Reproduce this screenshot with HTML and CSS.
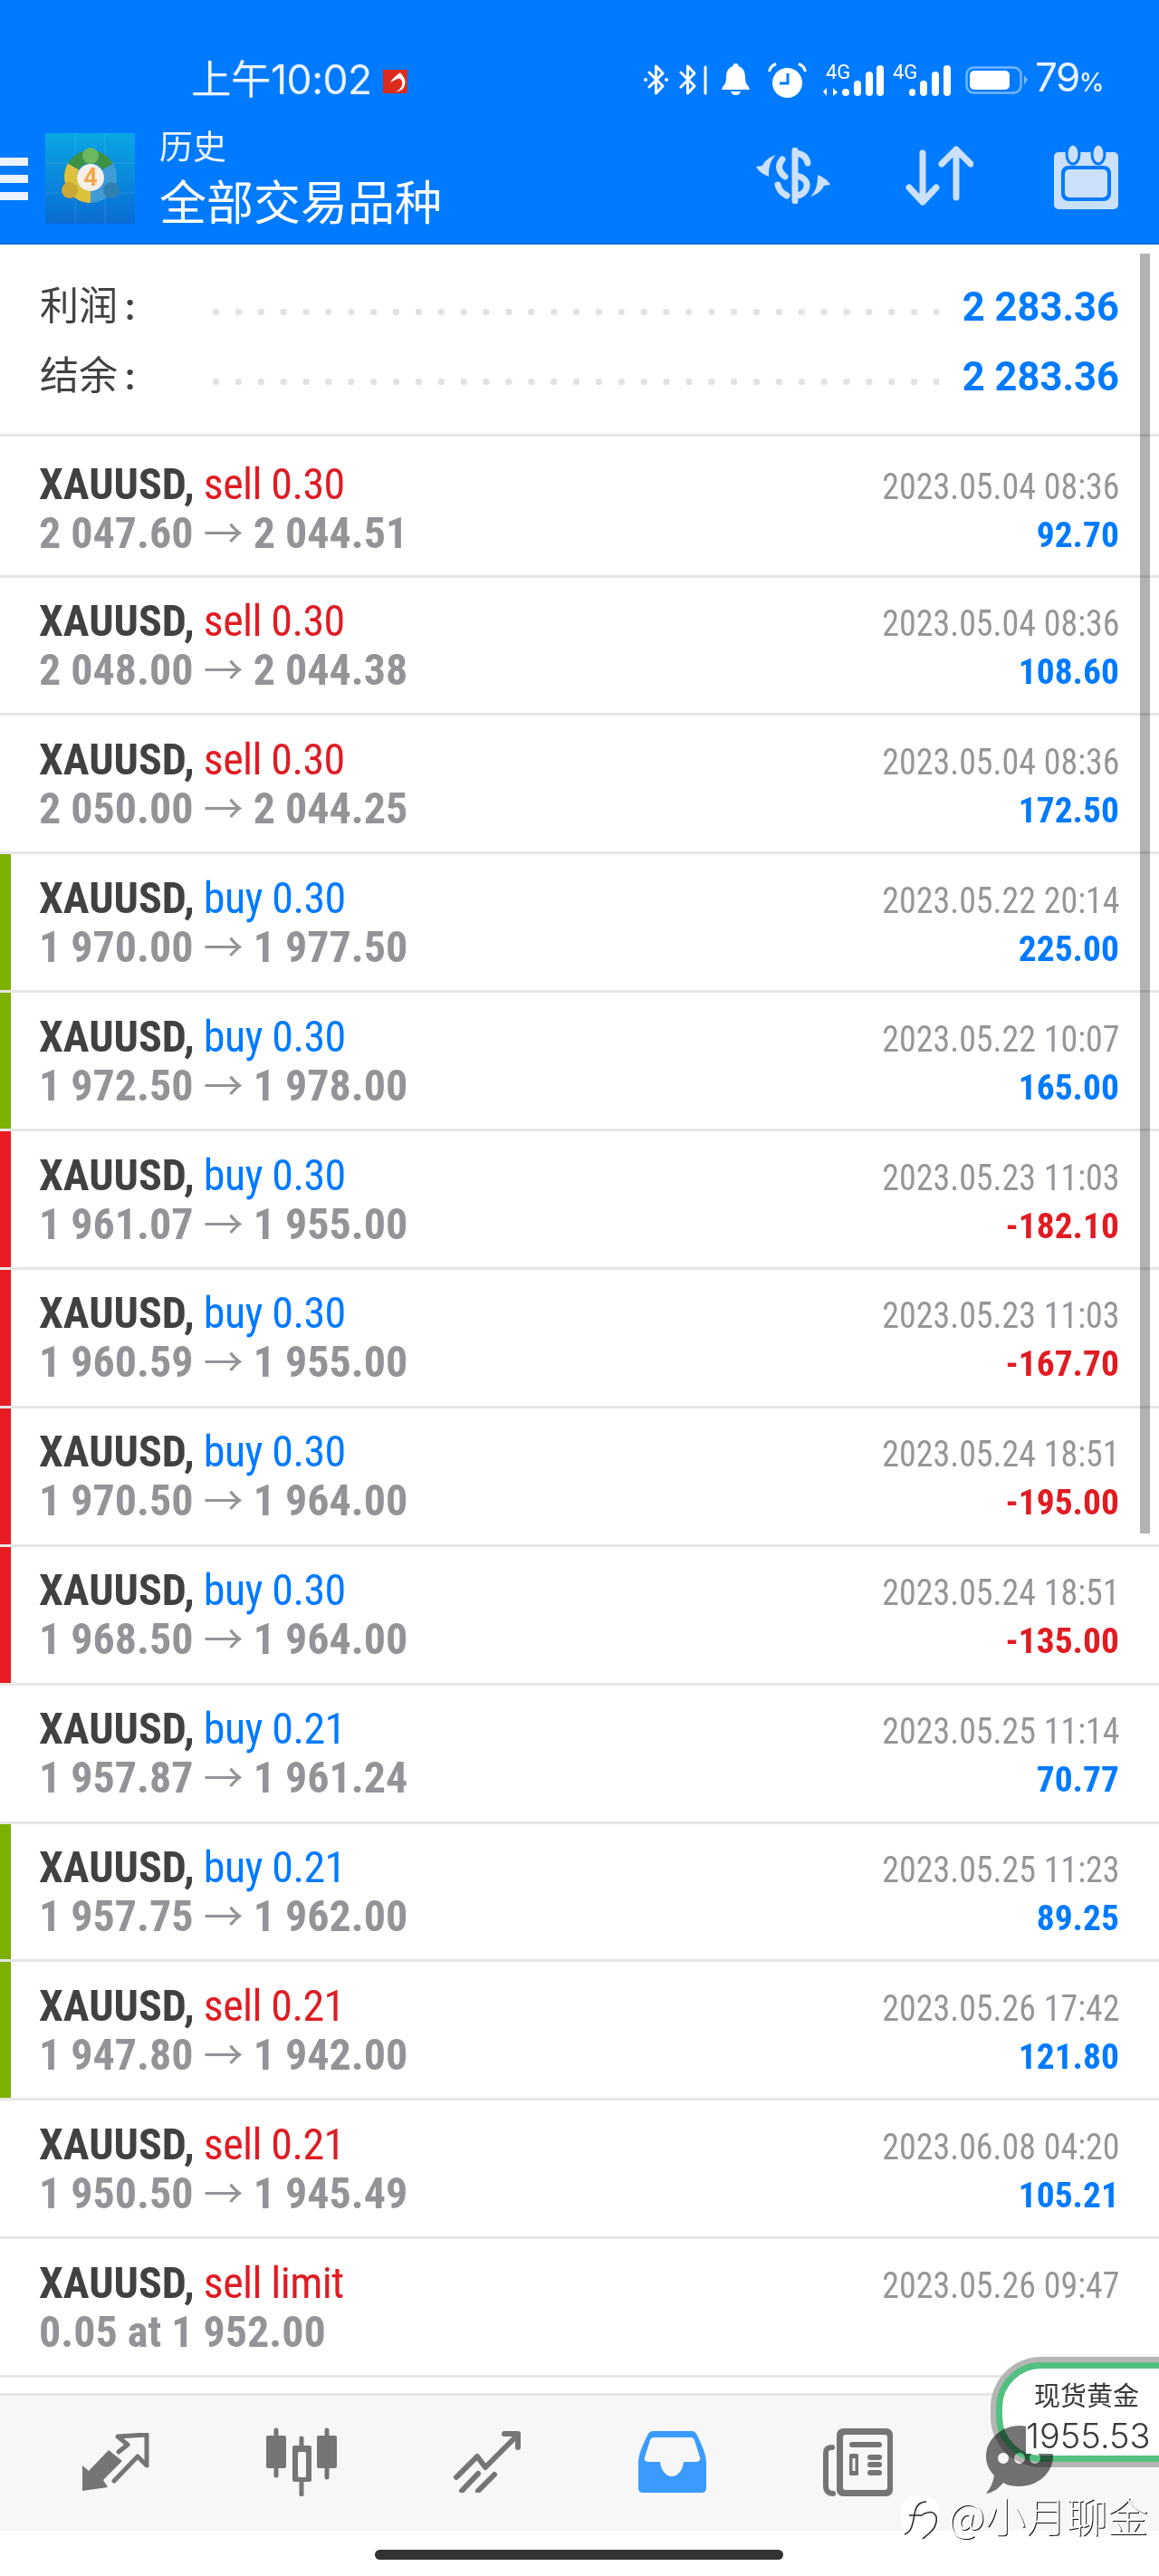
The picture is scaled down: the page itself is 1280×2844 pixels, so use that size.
FILE: index.html
```html
<!DOCTYPE html>
<html lang="zh">
<head>
  <meta charset="UTF-8">
  <meta name="viewport" content="width=device-width, initial-scale=1.0">
  <title>历史 - 全部交易品种</title>
  <link rel="stylesheet" href="styles.css">
</head>
<body>
  <div class="header">
    <!-- status bar -->
    <div class="status">
      <span class="time">上午10:02</span>
      <svg class="notif" viewBox="0 0 27 26">
        <rect width="27" height="26" fill="#dc2a1c"/>
        <path d="M8 14 C11 9 15 6 19 3 L21 6 C25 10 26 16 22 21 C20 23 17 24 14 24 C19 22 22 18 21 13 C20 10 18 9 16 10 Z" fill="#fff"/>
      </svg>
      <div class="status-icons">
        <svg width="27" height="34" viewBox="0 0 27 34"><path class="bt" d="M6 9 L21 24 L13.5 32 V2 L21 10 L6 25"/><circle cx="2" cy="17" r="2" fill="#fff"/><circle cx="25" cy="17" r="2" fill="#fff"/></svg>
        <svg class="gap-12" width="31" height="34" viewBox="0 0 31 34"><path class="bt" d="M2 9 L17 24 L9.5 32 V2 L17 10 L2 25"/><path class="bt" d="M29 3 V32"/></svg>
        <svg class="gap-16" width="31" height="36" viewBox="0 0 31 36"><path fill="#fff" d="M15.5 0a3 3 0 0 1 3 3C25 5 26 11 26 16c0 4 1 7 4 10l1 3H0l1-3c3-3 4-6 4-10 0-5 1-11 7.500-13a3 3 0 0 1 3-3z"/><path fill="#fff" d="M10 31h11c-1 3-3 4-5.500 4s-4.500-1-5.500-4z"/></svg>
        <svg class="gap-20" width="43" height="39" viewBox="0 0 43 39"><circle cx="21.500" cy="22.500" r="16.500" fill="#fff"/><path d="M22 12V23H13" fill="none" stroke="#007aff" stroke-width="3"/><path d="M1.500 10C2.500 6 5 3 9 1.500M41.500 10C40.500 6 38 3 34 1.500" fill="none" stroke="#fff" stroke-width="3"/></svg>
        <svg class="gap-18" width="67" height="40" viewBox="0 -3 67 40">
          <text class="sig-text" x="3" y="16">4G</text>
          <path d="M4 26V35L0 30ZM11 35V26L16 31" fill="#fff"/>
          <rect x="21" y="27" width="8" height="8" rx="4" fill="#fff"/>
          <rect x="34" y="18" width="8" height="17" rx="4" fill="#fff"/>
          <rect x="47" y="8" width="8" height="27" rx="4" fill="#fff"/>
          <rect x="59" y="1" width="8" height="34" rx="4" fill="#fff"/>
        </svg>
        <svg class="gap-10" width="64" height="40" viewBox="0 -3 64 40">
          <text class="sig-text" x="0" y="16">4G</text>
          <rect x="18" y="27" width="7" height="8" rx="3.500" fill="#fff"/>
          <rect x="30" y="18" width="8" height="17" rx="4" fill="#fff"/>
          <rect x="43" y="8" width="8" height="27" rx="4" fill="#fff"/>
          <rect x="56" y="1" width="8" height="34" rx="4" fill="#fff"/>
        </svg>
        <svg class="gap-16" width="69" height="31" viewBox="0 0 69 31">
          <rect x="1.500" y="1.500" width="60" height="28" rx="8" fill="none" stroke="#fff" stroke-opacity=".45" stroke-width="2.500"/>
          <rect x="5" y="5" width="44" height="21" rx="5" fill="#fff"/>
          <path d="M65 10 L69 15 L65 21Z" fill="#fff" fill-opacity=".45"/>
        </svg>
        <span class="battery-pct">79<small>%</small></span>
      </div>
    </div>

    <!-- toolbar -->
    <div class="toolbar">
      <div class="menu"><i></i><i></i><i></i></div>
      <svg class="app-icon" width="99" height="100" viewBox="0 0 99 100">
        <defs>
          <linearGradient id="appBg" x1="0" y1="0" x2="0" y2="1"><stop offset="0" stop-color="#0aa6e4"/><stop offset="1" stop-color="#0a6cd2"/></linearGradient>
        </defs>
        <rect width="99" height="100" fill="url(#appBg)"/>
        <path d="M33 0V100M66 0V100M0 33H99M0 66H99" stroke="#fff" stroke-opacity=".12"/>
        <path d="M31 37A22 22 0 0 1 69 37" fill="none" stroke="#3f9146" stroke-width="14"/>
        <path d="M31 37A22 22 0 0 0 50 70" fill="none" stroke="#dcc23c" stroke-width="14"/>
        <path d="M69 37A22 22 0 0 1 50 70" fill="none" stroke="#3f9cd6" stroke-width="14"/>
        <circle cx="50" cy="25" r="9" fill="#6cb860"/>
        <circle cx="27" cy="63" r="9" fill="#c9a838"/>
        <circle cx="73" cy="63" r="9" fill="#2f7fb0"/>
        <circle cx="50" cy="49" r="15" fill="#f4efe8"/>
        <text class="app-four" x="50" y="58">4</text>
      </svg>
      <div class="title">
        <div class="title-small">历史</div>
        <div class="title-big">全部交易品种</div>
      </div>
      <div class="tools">
        <svg class="tool-exch" width="82" height="62" viewBox="0 0 82 62">
          <path class="tool-line" d="M43 3V59M44 6C52 7 56 11 57 17M29 13C24 19 24 26 32 32M24 41C25 46 28 50 34 53M44 31C52 32 57 37 56 43C55 49 50 53 44 53"/>
          <path class="tool-fill" d="M22 8C16 14 14 20 14 32C10 30 4 28 0 21L7 20C9 15 15 10 22 8Z"/>
          <path class="tool-fill" d="M60 54C66 48 68 42 68 30C72 32 78 34 82 41L75 42C73 47 67 52 60 54Z"/>
        </svg>
        <svg class="tool-sort" width="75" height="66" viewBox="0 0 75 66">
          <path class="tool-line" d="M19 8V62M4 46L19 62L34 46M56 4V57M40 20L56 4L72 20"/>
        </svg>
        <svg width="71" height="73" viewBox="0 0 71 73">
          <rect y="10" width="71" height="63" rx="5" class="tool-fill"/>
          <ellipse cx="21" cy="12" rx="7" ry="11" class="tool-fill ear"/>
          <ellipse cx="49" cy="12" rx="7" ry="11" class="tool-fill ear"/>
          <rect x="8" y="25" width="55" height="39" rx="8" fill="#007aff"/>
          <rect x="12" y="29" width="47" height="31" rx="5" class="tool-fill"/>
        </svg>
      </div>
    </div>
  </div>

  <div class="list">
    <div class="summary">
      <div class="sum-row"><span class="sum-label">利润<em>:</em></span><span class="dots"></span><span class="sum-value">2 283.36</span></div>
      <div class="sum-row"><span class="sum-label">结余<em>:</em></span><span class="dots"></span><span class="sum-value">2 283.36</span></div>
    </div>

    <div class="row">
      <div class="cell-l"><div class="l1"><b>XAUUSD,</b> <span class="sell">sell 0.30</span></div><div class="l2">2 047.60 <span class="arrow">→</span> 2 044.51</div></div>
      <div class="cell-r"><div class="date">2023.05.04 08:36</div><div class="pnl">92.70</div></div>
    </div>
    <div class="row">
      <div class="cell-l"><div class="l1"><b>XAUUSD,</b> <span class="sell">sell 0.30</span></div><div class="l2">2 048.00 <span class="arrow">→</span> 2 044.38</div></div>
      <div class="cell-r"><div class="date">2023.05.04 08:36</div><div class="pnl">108.60</div></div>
    </div>
    <div class="row">
      <div class="cell-l"><div class="l1"><b>XAUUSD,</b> <span class="sell">sell 0.30</span></div><div class="l2">2 050.00 <span class="arrow">→</span> 2 044.25</div></div>
      <div class="cell-r"><div class="date">2023.05.04 08:36</div><div class="pnl">172.50</div></div>
    </div>
    <div class="row mark-green">
      <div class="cell-l"><div class="l1"><b>XAUUSD,</b> <span class="buy">buy 0.30</span></div><div class="l2">1 970.00 <span class="arrow">→</span> 1 977.50</div></div>
      <div class="cell-r"><div class="date">2023.05.22 20:14</div><div class="pnl">225.00</div></div>
    </div>
    <div class="row mark-green">
      <div class="cell-l"><div class="l1"><b>XAUUSD,</b> <span class="buy">buy 0.30</span></div><div class="l2">1 972.50 <span class="arrow">→</span> 1 978.00</div></div>
      <div class="cell-r"><div class="date">2023.05.22 10:07</div><div class="pnl">165.00</div></div>
    </div>
    <div class="row mark-red">
      <div class="cell-l"><div class="l1"><b>XAUUSD,</b> <span class="buy">buy 0.30</span></div><div class="l2">1 961.07 <span class="arrow">→</span> 1 955.00</div></div>
      <div class="cell-r"><div class="date">2023.05.23 11:03</div><div class="pnl loss">-182.10</div></div>
    </div>
    <div class="row mark-red">
      <div class="cell-l"><div class="l1"><b>XAUUSD,</b> <span class="buy">buy 0.30</span></div><div class="l2">1 960.59 <span class="arrow">→</span> 1 955.00</div></div>
      <div class="cell-r"><div class="date">2023.05.23 11:03</div><div class="pnl loss">-167.70</div></div>
    </div>
    <div class="row mark-red">
      <div class="cell-l"><div class="l1"><b>XAUUSD,</b> <span class="buy">buy 0.30</span></div><div class="l2">1 970.50 <span class="arrow">→</span> 1 964.00</div></div>
      <div class="cell-r"><div class="date">2023.05.24 18:51</div><div class="pnl loss">-195.00</div></div>
    </div>
    <div class="row mark-red">
      <div class="cell-l"><div class="l1"><b>XAUUSD,</b> <span class="buy">buy 0.30</span></div><div class="l2">1 968.50 <span class="arrow">→</span> 1 964.00</div></div>
      <div class="cell-r"><div class="date">2023.05.24 18:51</div><div class="pnl loss">-135.00</div></div>
    </div>
    <div class="row">
      <div class="cell-l"><div class="l1"><b>XAUUSD,</b> <span class="buy">buy 0.21</span></div><div class="l2">1 957.87 <span class="arrow">→</span> 1 961.24</div></div>
      <div class="cell-r"><div class="date">2023.05.25 11:14</div><div class="pnl">70.77</div></div>
    </div>
    <div class="row mark-green">
      <div class="cell-l"><div class="l1"><b>XAUUSD,</b> <span class="buy">buy 0.21</span></div><div class="l2">1 957.75 <span class="arrow">→</span> 1 962.00</div></div>
      <div class="cell-r"><div class="date">2023.05.25 11:23</div><div class="pnl">89.25</div></div>
    </div>
    <div class="row mark-green">
      <div class="cell-l"><div class="l1"><b>XAUUSD,</b> <span class="sell">sell 0.21</span></div><div class="l2">1 947.80 <span class="arrow">→</span> 1 942.00</div></div>
      <div class="cell-r"><div class="date">2023.05.26 17:42</div><div class="pnl">121.80</div></div>
    </div>
    <div class="row">
      <div class="cell-l"><div class="l1"><b>XAUUSD,</b> <span class="sell">sell 0.21</span></div><div class="l2">1 950.50 <span class="arrow">→</span> 1 945.49</div></div>
      <div class="cell-r"><div class="date">2023.06.08 04:20</div><div class="pnl">105.21</div></div>
    </div>
    <div class="row">
      <div class="cell-l"><div class="l1"><b>XAUUSD,</b> <span class="sell">sell limit</span></div><div class="l2">0.05 at 1 952.00</div></div>
      <div class="cell-r"><div class="date">2023.05.26 09:47</div></div>
    </div>

    <div class="scrollbar"></div>
  </div>

  <!-- bottom tabs -->
  <div class="tabs">
    <div class="tab">
      <svg width="75" height="65" viewBox="0 0 75 65">
        <path class="tab-fill" d="M1 36L8 42L30 19L45 31L24 52L29 60L1 64Z"/>
        <path class="tab-line" d="M41 21L51 13L40 4L72 2L72 36L62 26L36 53" stroke-linecap="butt"/>
      </svg>
    </div>
    <div class="tab">
      <svg width="78" height="76" viewBox="0 0 78 76">
        <path class="tab-line" d="M11 3V53M39 12V74M67 3V55"/>
        <rect y="9" width="22" height="36" rx="2" class="tab-fill"/>
        <rect x="56" y="9" width="22" height="36" rx="2" class="tab-fill"/>
        <rect x="29" y="20" width="21" height="40" rx="2" class="tab-fill"/>
        <rect x="35" y="27" width="9" height="28" rx="1.500" fill="#f7f7f7"/>
      </svg>
    </div>
    <div class="tab">
      <svg width="74" height="68" viewBox="0 0 74 68">
        <path class="tab-line wide" d="M3 51L26 28L35 40L70 5M56 3H71V18M27 47L9 66M45 48L27 66"/>
      </svg>
    </div>
    <div class="tab">
      <svg width="75" height="68" viewBox="0 0 75 68">
        <path fill="#3a9bfd" d="M16 0H59C62 0 64 2 65 5C71 17 75 26 75 36V63C75 66 73 68 70 68H5C2 68 0 66 0 63V36C0 26 4 17 10 5C11 2 13 0 16 0Z"/>
        <path fill="#f7f7f7" d="M17 7H58C60 7 61 8 62 10L68 29C69 32 67 34 64 34H50C49 44 43 50 37 50C31 50 25 44 24 34H11C8 34 6 32 7 29L13 10C14 8 15 7 17 7Z"/>
      </svg>
    </div>
    <div class="tab">
      <svg width="77" height="75" viewBox="0 0 77 75">
        <path class="tab-line thick" d="M10 21C5 21 3 23 3 27V64C3 69 6 72 11 72"/>
        <rect x="15" width="62" height="75" rx="7" class="tab-fill"/>
        <rect x="22" y="7" width="49" height="61" rx="3" fill="#f7f7f7"/>
        <rect x="29" y="15" width="36" height="6" rx="3" class="tab-fill"/>
        <rect x="29" y="28" width="10" height="24" rx="1.500" class="tab-fill"/>
        <rect x="32.500" y="33" width="3" height="14" fill="#f7f7f7"/>
        <rect x="49" y="29" width="16" height="6" rx="3" class="tab-fill"/>
        <rect x="49" y="37" width="16" height="6" rx="3" class="tab-fill"/>
        <rect x="49" y="46" width="16" height="6" rx="3" class="tab-fill"/>
      </svg>
    </div>
  </div>

  <div class="home-area"><div class="home-bar"></div></div>

  <!-- floating price widget, chat bubble, watermark -->
  <div class="price-pill">
    <div class="pill-name">现货黄金</div>
    <div class="pill-price">1955.53</div>
  </div>
  <svg class="chat" width="74" height="75" viewBox="0 0 74 75">
    <path fill="#757575" fill-rule="evenodd" d="M37 0C57 0 74 15 74 34C74 52 57 67 37 67C30 67 24 66 19 63C14 69 8 74 0 75C5 69 8 62 9 55C3 49 0 42 0 34C0 15 17 0 37 0ZM19 30a6 6 0 1 0 0.010 0ZM37 30a6 6 0 1 0 0.010 0ZM54 30a6 6 0 1 0 0.010 0Z"/>
  </svg>
  <div class="watermark">
    <svg width="44" height="50" viewBox="0 0 44 50">
      <rect width="42" height="42" rx="16" fill="#fff"/>
      <path d="M4 42C12 40 13 30 15 20C16 12 20 6 28 6M9 21H24M24 20C36 14 42 20 38 32C36 38 30 42 24 47" fill="none" stroke="#222" stroke-width="1.500"/>
    </svg>
    <span>@小月聊金</span>
  </div>
</body>
</html>
```
FILE: styles.css
```css
* {
  box-sizing: border-box;
}
body {
  position: relative;
  width: 1280px;
  height: 2844px;
  margin: 0;
  overflow: hidden;
  background: #fff;
  font-family: "Roboto Condensed", Roboto, "Noto Sans CJK SC", sans-serif;
}

/* header */
.header {
  height: 270px;
  padding-top: 68px;
  background: #007aff;
  border-bottom: 2px solid #0a6fdc;
}
.status {
  display: flex;
  align-items: center;
  height: 40px;
  padding-left: 211px;
  color: #eaf3ff;
}
.time {
  font: 400 44.5px/40px Inter, "Noto Sans CJK SC", sans-serif;
  letter-spacing: -0.5px;
}
.notif {
  width: 27px;
  height: 26px;
  margin-left: 12px;
  margin-top: 3px;
}
.status-icons {
  display: flex;
  align-items: center;
  margin-left: auto;
  padding-right: 62px;
}
.status-icons svg {
  flex: none;
}
.gap-10 { margin-left: 10px; }
.gap-12 { margin-left: 12px; }
.gap-16 { margin-left: 16px; }
.gap-18 { margin-left: 18px; }
.gap-20 { margin-left: 20px; }
.bt {
  fill: none;
  stroke: #fff;
  stroke-width: 3;
  stroke-linecap: round;
  stroke-linejoin: round;
}
.sig-text {
  font: 400 22px Roboto, sans-serif;
  fill: #fff;
}
.battery-pct {
  margin-left: 8px;
  font: 400 44px/40px Inter, sans-serif;
  letter-spacing: -1.5px;
  color: #eaf3ff;
}
.battery-pct small {
  font-size: 28px;
  font-weight: 500;
}

.toolbar {
  display: flex;
  align-items: center;
  height: 100px;
  margin-top: 39px;
  padding-right: 45px;
}
.menu {
  display: flex;
  flex-direction: column;
  gap: 10px;
  width: 31px;
  margin-right: 19px;
}
.menu i {
  display: block;
  height: 9px;
  background: #eaf3ff;
}
.app-four {
  font: 700 27px Roboto, sans-serif;
  fill: #f2a84a;
  text-anchor: middle;
}
.title {
  margin-left: 27px;
  margin-top: -5px;
  color: #fff;
  font-family: "Noto Sans CJK SC", sans-serif;
}
.title-small {
  font-size: 37px;
  line-height: 44px;
  color: #eaf3ff;
}
.title-big {
  margin-top: 9px;
  font-size: 52px;
  line-height: 60px;
}
.tools {
  display: flex;
  align-items: center;
  gap: 83px;
  margin-left: auto;
  margin-top: -6px;
}
.tool-sort {
  margin-right: 6px;
}
.tool-line {
  fill: none;
  stroke: #cbe0fb;
  stroke-width: 7;
  stroke-linecap: round;
  stroke-linejoin: round;
}
.tool-fill {
  fill: #cbe0fb;
}
.ear {
  stroke: #007aff;
  stroke-width: 3;
}

/* list */
.list {
  position: relative;
}
.summary {
  height: 212px;
  padding: 27px 44px 0;
  border-bottom: 3px solid #e6e6e6;
}
.sum-row {
  display: flex;
  align-items: center;
  height: 77px;
}
.sum-label {
  width: 191px;
  margin-top: -2px;
  font: 400 43px/77px "Noto Sans CJK SC", sans-serif;
  color: #414141;
}
.sum-label em {
  margin-left: 8px;
  font: 700 40px Roboto, sans-serif;
}
.dots {
  flex: 1;
  height: 7px;
  margin: 18px 26px 0 0;
  background: radial-gradient(circle, #e2e2e2 3.5px, transparent 4px) -8.94px 0 / 24.875px 7px repeat-x;
}
.sum-value {
  margin-top: 7px;
  font: 700 43.5px/77px Roboto, sans-serif;
  color: #007aff;
}

.row {
  display: flex;
  align-items: baseline;
  height: 152.9px;
  padding: 0 44px 0 0;
  border-bottom: 3px solid #e6e6e6;
}
.row:nth-child(2) {
  height: 155.5px;
}
.row::before {
  content: "";
  align-self: stretch;
  flex: none;
  width: 12px;
  margin-right: 31px;
}
.mark-green::before { background: #7db000; }
.mark-red::before { background: #e81c22; }
.cell-l {
  padding-top: 21.5px;
  font-size: 48px;
  line-height: 54px;
}
.row:nth-child(2) .cell-l {
  padding-top: 25.5px;
}
.l1 {
  color: #414141;
}
.l2 {
  font-weight: 700;
  color: #939398;
}
.sell, .buy {
  margin-left: -1px;
  letter-spacing: -0.6px;
}
.sell { color: #e01b22; }
.buy { color: #007aff; }
.arrow {
  font: 400 44px/0 "Noto Sans CJK SC", sans-serif;
}
.cell-r {
  margin-left: auto;
  text-align: right;
  font-size: 41px;
  line-height: 54px;
}
.date {
  color: #96969a;
  transform: scaleX(0.925);
  transform-origin: right center;
}
.pnl {
  font-size: 39.5px;
  font-weight: 700;
  color: #007aff;
}
.pnl.loss {
  color: #e01b22;
}
.scrollbar {
  position: absolute;
  top: 10px;
  right: 10px;
  width: 11px;
  height: 1413px;
  background: rgba(0, 0, 0, 0.3);
}

/* tabs */
.tabs {
  display: flex;
  align-items: center;
  height: 152px;
  margin-top: 17px;
  padding: 0 0 3px 25px;
  background: #f7f7f7;
  border-top: 3px solid #e6e6e6;
}
.tab {
  display: flex;
  justify-content: center;
  width: 205px;
}
.tab-fill {
  fill: #757575;
}
.tab-line {
  fill: none;
  stroke: #757575;
  stroke-width: 5;
  stroke-linecap: round;
  stroke-linejoin: round;
}
.tab-line.wide { stroke-width: 6; }
.tab-line.thick { stroke-width: 6; }

.home-area {
  padding-top: 21px;
}
.home-bar {
  width: 451px;
  height: 11px;
  margin-left: 414px;
  border-radius: 6px;
  background: #333;
}

/* overlays */
.price-pill {
  position: absolute;
  left: 1100px;
  top: 2608px;
  width: 240px;
  height: 110px;
  padding: 10px 0 0 35px;
  background: #fff;
  border: 7px solid #52c080;
  border-radius: 50px;
  box-shadow: 0 0 0 6px #b5b5b5;
  color: #3a3a3a;
}
.pill-name {
  font: 400 29px/36px "Noto Sans CJK SC", sans-serif;
}
.pill-price {
  position: relative;
  z-index: 1;
  margin: 8px 0 0 -9px;
  background: #fff;
  font: 300 38px/40px Inter, sans-serif;
}
.chat {
  position: absolute;
  left: 1089px;
  top: 2678px;
  mix-blend-mode: multiply;
}
.watermark {
  position: absolute;
  left: 995px;
  top: 2748px;
  display: flex;
  align-items: center;
  gap: 8px;
  font: 300 45px/50px "Noto Sans CJK SC", sans-serif;
  color: #fff;
  text-shadow: 1px 1px 0 #111;
}
.watermark svg {
  margin-top: 8px;
}
```
